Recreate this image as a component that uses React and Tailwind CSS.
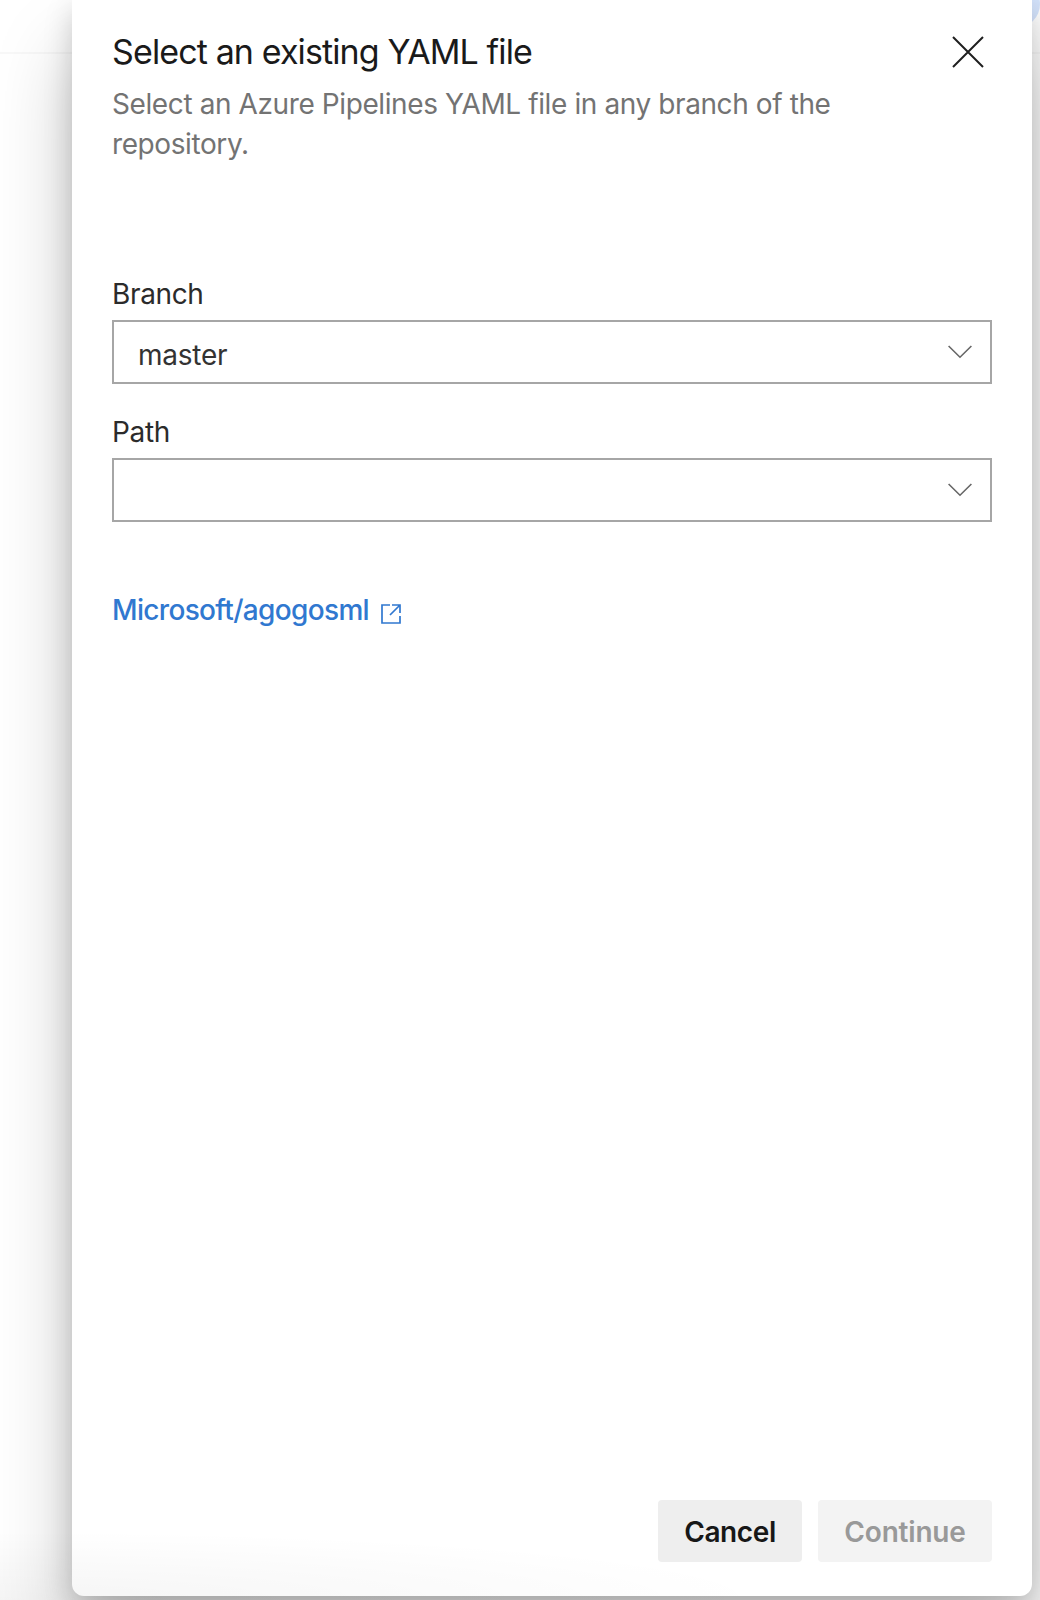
function Chevron() {
  return (
    <svg className="block h-[14px] w-[24px] shrink-0" viewBox="0 0 24 14" fill="none" stroke="#666666" strokeWidth="1.6">
      <path d="M0.6 1L12 12.2L23.4 1" />
    </svg>
  );
}

function Field({ label, value }) {
  return (
    <div className="flex flex-col">
      <label className="h-[38px] pt-px text-[28px] leading-[38px] tracking-[-0.35px] text-[#2b2b2b]">{label}</label>
      <button aria-label={label} className="mt-2 flex h-[64px] w-full items-center justify-between border-2 border-[#a6a6a6] bg-white pr-[18px] pl-[24px] text-left">
        <span className="pt-[5px] text-[28px] leading-[38px] tracking-[-0.25px] text-[#333333]">{value}</span>
        <Chevron />
      </button>
    </div>
  );
}

export default function App() {
  return (
    <div className="relative h-[1600px] w-[1040px] overflow-hidden bg-white font-['Inter',sans-serif]">
      <div className="h-[54px] border-b-2 border-[#f8f8f8]" />
      <div className="absolute top-[-20px] left-[992px] h-[48px] w-[48px] rounded-full bg-[#d4e3fb]" />

      <section
        role="dialog"
        className="absolute top-0 left-[72px] flex h-[1596px] w-[960px] flex-col rounded-b-[12px] bg-white px-[40px] shadow-[0_51px_80px_rgba(0,0,0,0.22),0_10px_29px_rgba(0,0,0,0.18)]"
      >
        <header className="flex items-start justify-between pt-[28px]">
          <div className="w-[740px]">
            <h1 className="text-[34px] leading-[48px] font-normal tracking-[-0.88px] whitespace-nowrap text-[#1a1a1a]">Select an existing YAML file</h1>
            <p className="mt-2 text-[28px] leading-[40px] tracking-[-0.4px] text-[#737373]">
              Select an Azure Pipelines YAML file in any branch of the repository.
            </p>
          </div>
          <button aria-label="Close" className="mt-[8px] mr-[8px]">
            <svg className="block h-8 w-8" viewBox="0 0 32 32" fill="none" stroke="#1f1f1f" strokeWidth="2">
              <path d="M1 1L31 31M31 1L1 31" />
            </svg>
          </button>
        </header>

        <div className="mt-[110px] flex flex-col gap-[28px]">
          <Field label="Branch" value="master" />
          <Field label="Path" value="" />
        </div>

        <a className="mt-[69px] flex items-center text-[28px] leading-[38px] text-[#3078d0]">
          <span className="font-medium tracking-[-0.66px]">Microsoft/agogosml</span>
          <svg className="mt-[7px] ml-[12px] h-[20px] w-[20px]" viewBox="0 0 20 20" fill="none" stroke="currentColor" strokeWidth="1.7">
            <path d="M9 1H1V19H19V12M11 1H19V9M19 1L9 11" />
          </svg>
        </a>

        <footer className="mt-auto mb-[34px] flex justify-end gap-4 text-[28px] leading-[38px] font-semibold">
          <button className="h-[62px] w-[144px] rounded-[4px] bg-[#eeeeee] pt-[2px] tracking-[-0.4px] text-[#171717]">Cancel</button>
          <button disabled className="h-[62px] w-[174px] rounded-[4px] bg-[#f3f3f3] pt-[2px] tracking-[-0.2px] text-[#999999]">Continue</button>
        </footer>
      </section>

      <div className="pointer-events-none absolute bottom-0 left-0 h-[70px] w-[780px] bg-[radial-gradient(ellipse_780px_70px_at_0_100%,rgba(0,0,0,0.04),transparent)]" />
    </div>
  );
}
